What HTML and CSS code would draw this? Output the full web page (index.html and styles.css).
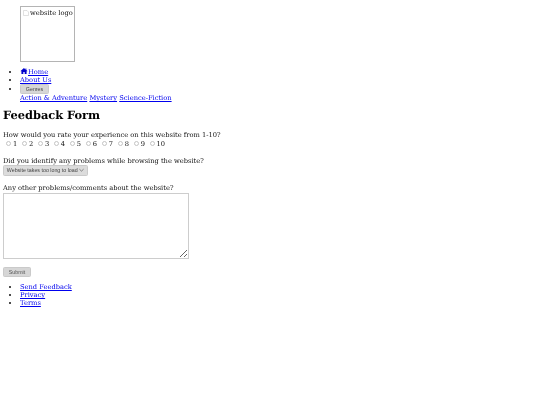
FILE: index.html
```html
<!DOCTYPE html>
<html lang="en">
<head>
<meta charset="utf-8">
<title>Feedback Form</title>
<link rel="stylesheet" href="styles.css">
</head>
<body>
<header class="site-header">
  <div class="logo">
    <svg class="broken" viewBox="0 0 6 6" width="6" height="6"><path d="M.5.5h3.500l1.500 1.500v3.500h-5z" fill="#fff" stroke="#ccc" stroke-width=".6"/></svg>
    <span>website logo</span>
  </div>
  <ul class="list">
    <li><a href="#"><svg class="home" viewBox="0 0 16 14" width="8" height="7"><path d="M8 0 0 7l1 1 1-.9V14h4.500V9.500h3V14H14V7.100l1 .9 1-1-2.500-2.200V1h-2v3L8 0z" fill="#00c"/></svg>Home</a></li>
    <li><a href="#">About Us</a></li>
    <li>
      <button class="btn genres" type="button">Genres</button>
      <div class="sub"><a href="#">Action &amp; Adventure</a> <a href="#">Mystery</a> <a href="#">Science-Fiction</a></div>
    </li>
  </ul>
</header>
<main>
  <h1>Feedback Form</h1>
  <form>
    <p class="q first">How would you rate your experience on this website from 1-10?</p>
    <div class="rates">
      <label><input type="radio" name="r"> 1</label>
      <label><input type="radio" name="r"> 2</label>
      <label><input type="radio" name="r"> 3</label>
      <label><input type="radio" name="r"> 4</label>
      <label><input type="radio" name="r"> 5</label>
      <label><input type="radio" name="r"> 6</label>
      <label><input type="radio" name="r"> 7</label>
      <label><input type="radio" name="r"> 8</label>
      <label><input type="radio" name="r"> 9</label>
      <label><input type="radio" name="r"> 10</label>
    </div>
    <p class="q problems">Did you identify any problems while browsing the website?</p>
    <button class="btn select" type="button">Website takes too long to load <svg viewBox="0 0 6 4" width="5" height="4"><path d="M.5 1 3 3.300 5.500 1" fill="none" stroke="#444" stroke-width=".7"/></svg></button>
    <p class="q other">Any other problems/comments about the website?</p>
    <textarea class="comments"></textarea>
    <button class="btn submit" type="button">Submit</button>
  </form>
</main>
<footer>
  <ul class="list foot">
    <li><a href="#">Send Feedback</a></li>
    <li><a href="#">Privacy</a></li>
    <li><a href="#">Terms</a></li>
  </ul>
</footer>
</body>
</html>
```

FILE: styles.css
```css
html { background: #fff; }
body {
  margin: 0;
  padding: 3px;
  height: 399px;
  font: 6.700px/8px "DejaVu Serif", serif;
  color: #111;
  background: #fff;
  text-rendering: geometricPrecision;
  filter: blur(0.25px);
}
a { color: #00e; }
.logo {
  box-sizing: border-box;
  width: 55px;
  height: 56px;
  margin: 3px 0 6px 17px;
  border: 1px solid #b4b4b4;
  padding: 2px 2px;
  display: flex;
  align-items: flex-start;
  gap: 1px;
  white-space: nowrap;
}
.broken { margin-top: 1px; flex: none; }
.list { margin: 0; padding: 0 0 0 17px; }
.home { display: inline-block; width: 8px; height: 6px; vertical-align: 0; }
.btn {
  font: 5.300px/7px "Liberation Sans", sans-serif;
  color: #444;
  background: #d6d6d6;
  border: 1px solid #cacaca;
  border-radius: 1.500px;
  padding: 0;
  display: block;
}
.genres { width: 29px; height: 10px; }
h1 {
  font-size: 11.400px;
  line-height: 15px;
  margin: 6px 0 8px;
  font-weight: bold;
  color: #000;
}
.q { margin: 0; }
.rates {
  display: flex;
  gap: 4.700px;
  margin-top: 0.500px;
  padding-left: 3px;
}
.rates label { display: flex; align-items: center; gap: 2px; }
.rates input {
  appearance: none;
  box-sizing: border-box;
  width: 5px;
  height: 5px;
  margin: 0;
  border: 0.500px solid #c4c4c4;
  border-radius: 50%;
  background: #fff;
}
.problems { margin-top: 9.500px; }
.select {
  width: 85px;
  height: 11px;
  background: #dcdcdc;
  white-space: nowrap;
}
.other { margin-top: 8px; }
.comments {
  display: block;
  box-sizing: border-box;
  width: 186px;
  height: 65.500px;
  margin: 1px 0 0;
  border: 1px solid #cdcdcd;
  background: #fff;
  padding: 0;
}
.submit { width: 28px; height: 10px; margin-top: 8.500px; color: #555; }
.foot { margin-top: 6px; }
```
